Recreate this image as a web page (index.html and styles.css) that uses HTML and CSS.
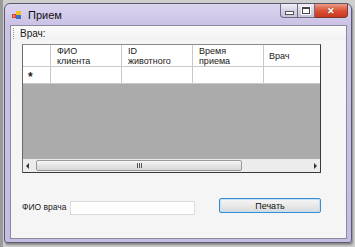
FILE: index.html
```html
<!DOCTYPE html>
<html>
<head>
<meta charset="utf-8">
<link rel="stylesheet" href="styles.css">
</head>
<body>
<div class="window">
  <div class="titlebar">
    <svg class="appicon" width="10" height="10" viewBox="0 0 10 10">
      <rect x="0" y="4" width="4" height="4" fill="#d8402a"/>
      <rect x="4" y="1" width="5" height="4" fill="#f0c020"/>
      <rect x="4" y="5" width="5" height="4" fill="#3a70c8"/>
      <rect x="1" y="5" width="2" height="2" fill="#f08070"/>
    </svg>
    <span class="title">Прием</span>
    <div class="controls">
      <div class="cbtn min"><span class="minbar"></span></div>
      <div class="cbtn max"><span class="maxbox"></span></div>
      <div class="cbtn close">✕</div>
    </div>
  </div>
  <div class="client">
    <div class="toolstrip"><span class="grip"></span><span class="tslabel">Врач:</span></div>
    <div class="grid">
      <div class="ghead">
        <div class="rh"></div>
        <div class="ch">ФИО<br>клиента</div>
        <div class="ch">ID<br>животного</div>
        <div class="ch">Время<br>приема</div>
        <div class="ch last single">Врач</div>
      </div>
      <div class="grow">
        <div class="rh star">*</div>
        <div class="cell"></div>
        <div class="cell"></div>
        <div class="cell"></div>
        <div class="cell last"></div>
      </div>
      <div class="gempty"></div>
      <div class="hscroll">
        <span class="arrow left"></span>
        <div class="track"><div class="thumb"><span class="tgrip"></span></div></div>
        <span class="arrow right"></span>
      </div>
    </div>
    <div class="bottom">
      <span class="blabel">ФИО врача</span>
      <div class="textbox"></div>
      <div class="button">Печать</div>
    </div>
  </div>
</div>
</body>
</html>
```

FILE: styles.css
```css
html, body {
  margin: 0;
  padding: 0;
}
body {
  width: 355px;
  height: 247px;
  overflow: hidden;
  background: #cfcfcf;
  padding: 3px 0 0 1px;
  box-sizing: border-box;
  font-family: "Liberation Sans", Arial, sans-serif;
  border-left: 3px solid #9a9a9a;
}
.window {
  width: 348px;
  height: 240px;
  box-sizing: border-box;
  border: 1px solid #5c586e;
  border-radius: 6px 6px 3px 3px;
  background: linear-gradient(180deg, #dcd5ef 0px, #cbc2e6 20px, #c5bce2 100%);
  box-shadow: 1px 2px 2px rgba(0,0,0,0.35);
  display: flex;
  flex-direction: column;
}
.titlebar {
  height: 21px;
  display: flex;
  align-items: center;
  position: relative;
  padding-left: 7px;
}
.appicon {
  margin-top: 1px;
}
.title {
  font-size: 11px;
  color: #111;
  margin-left: 6px;
  margin-top: 1px;
}
.controls {
  position: absolute;
  top: 0;
  right: 3px;
  display: flex;
}
.cbtn {
  height: 14px;
  box-sizing: border-box;
  border: 1px solid #6e6a80;
  border-top: none;
  display: flex;
  align-items: center;
  justify-content: center;
}
.min {
  width: 18px;
  border-radius: 0 0 0 4px;
  background: linear-gradient(180deg, #f2f0f8, #d6d2e6 50%, #c8c3dc);
}
.max {
  width: 17px;
  border-left: none;
  background: linear-gradient(180deg, #f2f0f8, #d6d2e6 50%, #c8c3dc);
}
.close {
  width: 33px;
  border-left: none;
  border-radius: 0 0 4px 0;
  background: linear-gradient(180deg, #eb9a86, #dc5438 50%, #c8361c);
  color: #fff;
  font-size: 9px;
  font-weight: bold;
  text-shadow: 0 0 1px #555;
  border-color: #7a3a30;
}
.minbar {
  width: 7px;
  height: 2px;
  background: #fff;
  border: 1px solid #555;
  margin-top: 4px;
}
.maxbox {
  width: 6px;
  height: 4px;
  border: 1px solid #444;
  border-top-width: 2px;
  background: #fff;
  outline: 1px solid #fff;
}
.client {
  flex: 1;
  margin: 0 4px 3px 5px;
  border: 1px solid #8c8a9c;
  background: #f5f5f5;
  box-sizing: border-box;
}
.toolstrip {
  height: 14px;
  display: flex;
  align-items: center;
  background: linear-gradient(180deg, #fbfbfb, #f1f1f1);
}
.grip {
  width: 1px;
  height: 11px;
  margin-left: 2px;
  border-left: 1px dotted #9a9a9a;
}
.tslabel {
  font-size: 10px;
  color: #1a1a1a;
  margin-left: 5px;
  margin-top: 1px;
}
.grid {
  margin: 4px 0 0 11px;
  width: 299px;
  height: 129px;
  box-sizing: border-box;
  border: 1px solid #3a3a3a;
  border-top-color: #8a8a8a;
  border-left-color: #6a6a6a;
  display: flex;
  flex-direction: column;
  overflow: hidden;
  background: #ababab;
}
.ghead, .grow {
  display: flex;
  background: #fff;
  flex: none;
}
.ghead {
  height: 22px;
  box-sizing: border-box;
  border-bottom: 1px solid #c8c8c8;
}
.grow {
  height: 17px;
  box-sizing: border-box;
  border-bottom: 1px solid #c8c8c8;
}
.rh {
  width: 28px;
  flex: none;
  box-sizing: border-box;
  border-right: 1px solid #c8c8c8;
}
.star {
  font-size: 12px;
  font-weight: bold;
  color: #222;
  padding-left: 5px;
  line-height: 20px;
}
.ch, .cell {
  width: 71px;
  flex: none;
  box-sizing: border-box;
  border-right: 1px solid #c8c8c8;
}
.ch {
  font-size: 9px;
  line-height: 10px;
  color: #1a1a1a;
  padding: 1px 0 0 6px;
}
.ch.single {
  padding-top: 6px;
  padding-left: 5px;
}
.last {
  border-right: none;
}
.gempty {
  flex: 1;
  background: #ababab;
}
.hscroll {
  height: 13px;
  flex: none;
  background: #ececec;
  display: flex;
  align-items: center;
}
.arrow {
  width: 0;
  height: 0;
  border-top: 3px solid transparent;
  border-bottom: 3px solid transparent;
  flex: none;
}
.arrow.left {
  border-right: 3px solid #333;
  margin: 0 7px 0 3px;
}
.arrow.right {
  border-left: 3px solid #333;
  margin: 0 3px 0 0;
}
.track {
  flex: 1;
  height: 11px;
  display: flex;
}
.thumb {
  width: 206px;
  height: 11px;
  box-sizing: border-box;
  border: 1px solid #9a9a9a;
  border-radius: 2px;
  background: linear-gradient(180deg, #f7f7f7, #e4e4e4 50%, #d6d6d6);
  display: flex;
  align-items: center;
  justify-content: center;
}
.tgrip {
  width: 5px;
  height: 5px;
  background: repeating-linear-gradient(90deg, #555 0 1px, transparent 1px 2px);
}
.bottom {
  display: flex;
  align-items: flex-start;
  margin-top: 25px;
  padding-left: 11px;
}
.blabel {
  width: 48px;
  font-size: 8.5px;
  color: #1a1a1a;
  margin-top: 4px;
  white-space: nowrap;
}
.textbox {
  width: 125px;
  height: 14px;
  box-sizing: border-box;
  border: 1px solid #dcdcdc;
  background: #fff;
  margin-top: 3px;
}
.button {
  width: 102px;
  height: 15px;
  margin-left: 24px;
  box-sizing: border-box;
  border: 1px solid #3c8ccc;
  border-radius: 2px;
  background: linear-gradient(180deg, #f6f6f6, #e9e9e9 50%, #d9d9d9);
  box-shadow: inset 0 0 0 1px #bfe0f6;
  font-size: 9px;
  color: #111;
  display: flex;
  align-items: center;
  justify-content: center;
}
```
